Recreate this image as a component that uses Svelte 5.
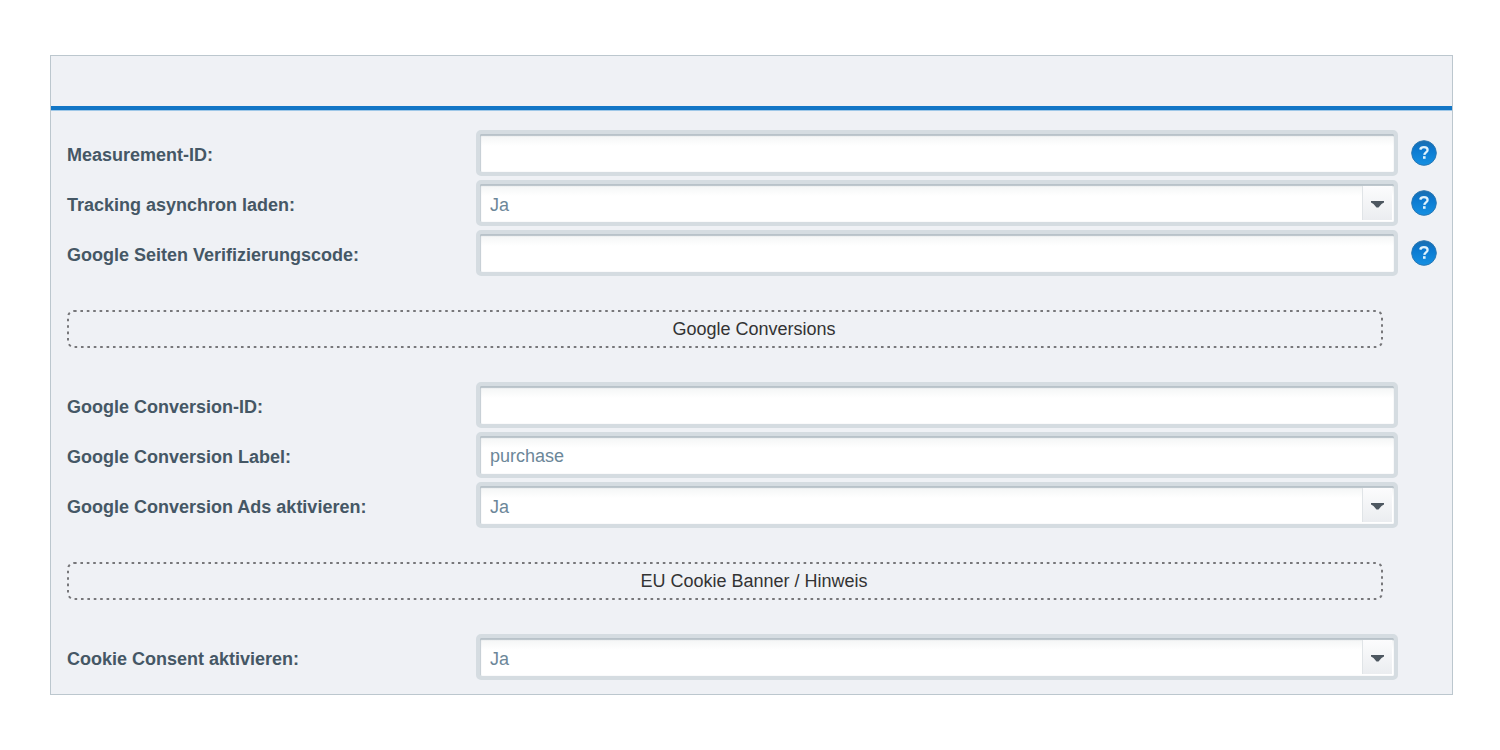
<script>
  const groups = $state([
    {
      title: '',
      fields: [
        { id: 'measurement-id', label: 'Measurement-ID:', type: 'text', value: '', help: true },
        { id: 'tracking-async', label: 'Tracking asynchron laden:', type: 'select', value: 'Ja', help: true },
        { id: 'site-verification', label: 'Google Seiten Verifizierungscode:', type: 'text', value: '', help: true }
      ]
    },
    {
      title: 'Google Conversions',
      fields: [
        { id: 'conversion-id', label: 'Google Conversion-ID:', type: 'text', value: '' },
        { id: 'conversion-label', label: 'Google Conversion Label:', type: 'text', value: 'purchase' },
        { id: 'conversion-ads', label: 'Google Conversion Ads aktivieren:', type: 'select', value: 'Ja' }
      ]
    },
    {
      title: 'EU Cookie Banner / Hinweis',
      fields: [
        { id: 'cookie-consent', label: 'Cookie Consent aktivieren:', type: 'select', value: 'Ja' }
      ]
    }
  ]);
</script>

<main class="page">
  <form class="panel">
    <header class="bar"></header>
    <div class="body">
      {#each groups as group}
        {#if group.title}
          <div class="divider">
            <svg class="dots" aria-hidden="true"><rect class="outline" rx="6" /></svg>
            <span>{group.title}</span>
          </div>
        {/if}
        <div class="rows">
          {#each group.fields as field}
            <div class="row">
              <label for={field.id}>{field.label}</label>
              {#if field.type === 'select'}
                <div class="combo">
                  <select id={field.id} class="control" bind:value={field.value}>
                    <option>Ja</option>
                  </select>
                  <span class="trigger">
                    <svg width="13" height="7" viewBox="0 0 13 7" aria-hidden="true">
                      <path d="M0 0h13v1.500L10.500 3 7.500 6.500h-2L2.500 3 0 1.500z" fill="#4d5760" />
                    </svg>
                  </span>
                </div>
              {:else}
                <input id={field.id} class="control" type="text" bind:value={field.value} />
              {/if}
              {#if field.help}
                <button class="help" type="button" aria-labelledby={field.id}>
                  <svg width="26" height="26" viewBox="0 0 26 26" aria-hidden="true">
                    <defs>
                      <linearGradient id="disc-{field.id}" x1="0" y1="0" x2="0" y2="1">
                        <stop offset="0" stop-color="#1a6dad" />
                        <stop offset="0.35" stop-color="#0b79d0" />
                        <stop offset="1" stop-color="#1590e2" />
                      </linearGradient>
                    </defs>
                    <circle cx="13" cy="13" r="12.300" fill="url(#disc-{field.id})" stroke="#2a78b4" />
                    <path d="M9.200 9.600C9.600 8 11 7.200 12.900 7.200c2.200 0 3.700 1 3.700 2.800 0 2.300-3.200 2.400-3.300 4.900" fill="none" stroke="#dff2fc" stroke-width="2.300" />
                    <rect x="12" y="16.200" width="2.600" height="2.600" fill="#dff2fc" />
                  </svg>
                </button>
              {/if}
            </div>
          {/each}
        </div>
      {/each}
    </div>
  </form>
</main>

<style>
  :global(body) {
    margin: 0;
    background: #fff;
  }

  .page {
    padding: 55px 47px 54px 50px;
    font-family: "Liberation Sans", Arial, sans-serif;
    font-size: 18px;
    line-height: 24px;
  }

  .panel {
    background: #eff1f5;
    border: 1px solid #bcc7ce;
  }

  .bar {
    height: 50px;
    border-bottom: 4px solid #1276c6;
    box-shadow: 0 1px 0 #9fc8e8;
  }

  .body {
    padding: 20px 15px 14px 16px;
  }

  .rows {
    display: grid;
    gap: 4px;
  }

  .row {
    display: grid;
    grid-template-columns: 396px minmax(0, 1fr) 26px;
    column-gap: 13px;
    align-items: center;
  }

  label {
    padding-top: 4px;
    color: #455765;
    font-weight: bold;
  }

  .control {
    box-sizing: border-box;
    width: 100%;
    height: 46px;
    margin: 0;
    padding: 3px 10px 0;
    border: 4px solid #d5dce1;
    border-radius: 5px;
    outline: none;
    appearance: none;
    background: linear-gradient(#f2f4f4, #fff 12px) padding-box;
    box-shadow: inset 0 2px 1px #b8c2c9, inset 1px 0 1px #c5ced4;
    color: #6c8799;
    font: inherit;
  }

  .combo {
    display: grid;
    grid-template-columns: minmax(0, 1fr) 36px;
  }

  .combo .control {
    grid-area: 1 / 1 / 2 / 3;
  }

  .trigger {
    grid-area: 1 / 2;
    z-index: 1;
    display: flex;
    align-items: center;
    justify-content: center;
    margin: 6px 6px 6px 0;
    padding-top: 2px;
    border-left: 1px solid #e0e4e7;
    background: linear-gradient(#fcfcfd, #ebedf0);
    pointer-events: none;
  }

  .help {
    display: flex;
    padding: 0;
    border: 0;
    background: none;
  }

  .divider {
    position: relative;
    display: flex;
    align-items: center;
    justify-content: center;
    box-sizing: border-box;
    height: 38px;
    margin: 34px 54px 34px 0;
    padding-left: 58px;
    color: #333;
  }

  .dots {
    position: absolute;
    inset: 0;
    width: 100%;
    height: 100%;
  }

  .outline {
    x: 1px;
    y: 1px;
    width: calc(100% - 2px);
    height: calc(100% - 2px);
    fill: none;
    stroke: #77777a;
    stroke-width: 2;
    stroke-dasharray: 2.600 3.800;
  }
</style>
